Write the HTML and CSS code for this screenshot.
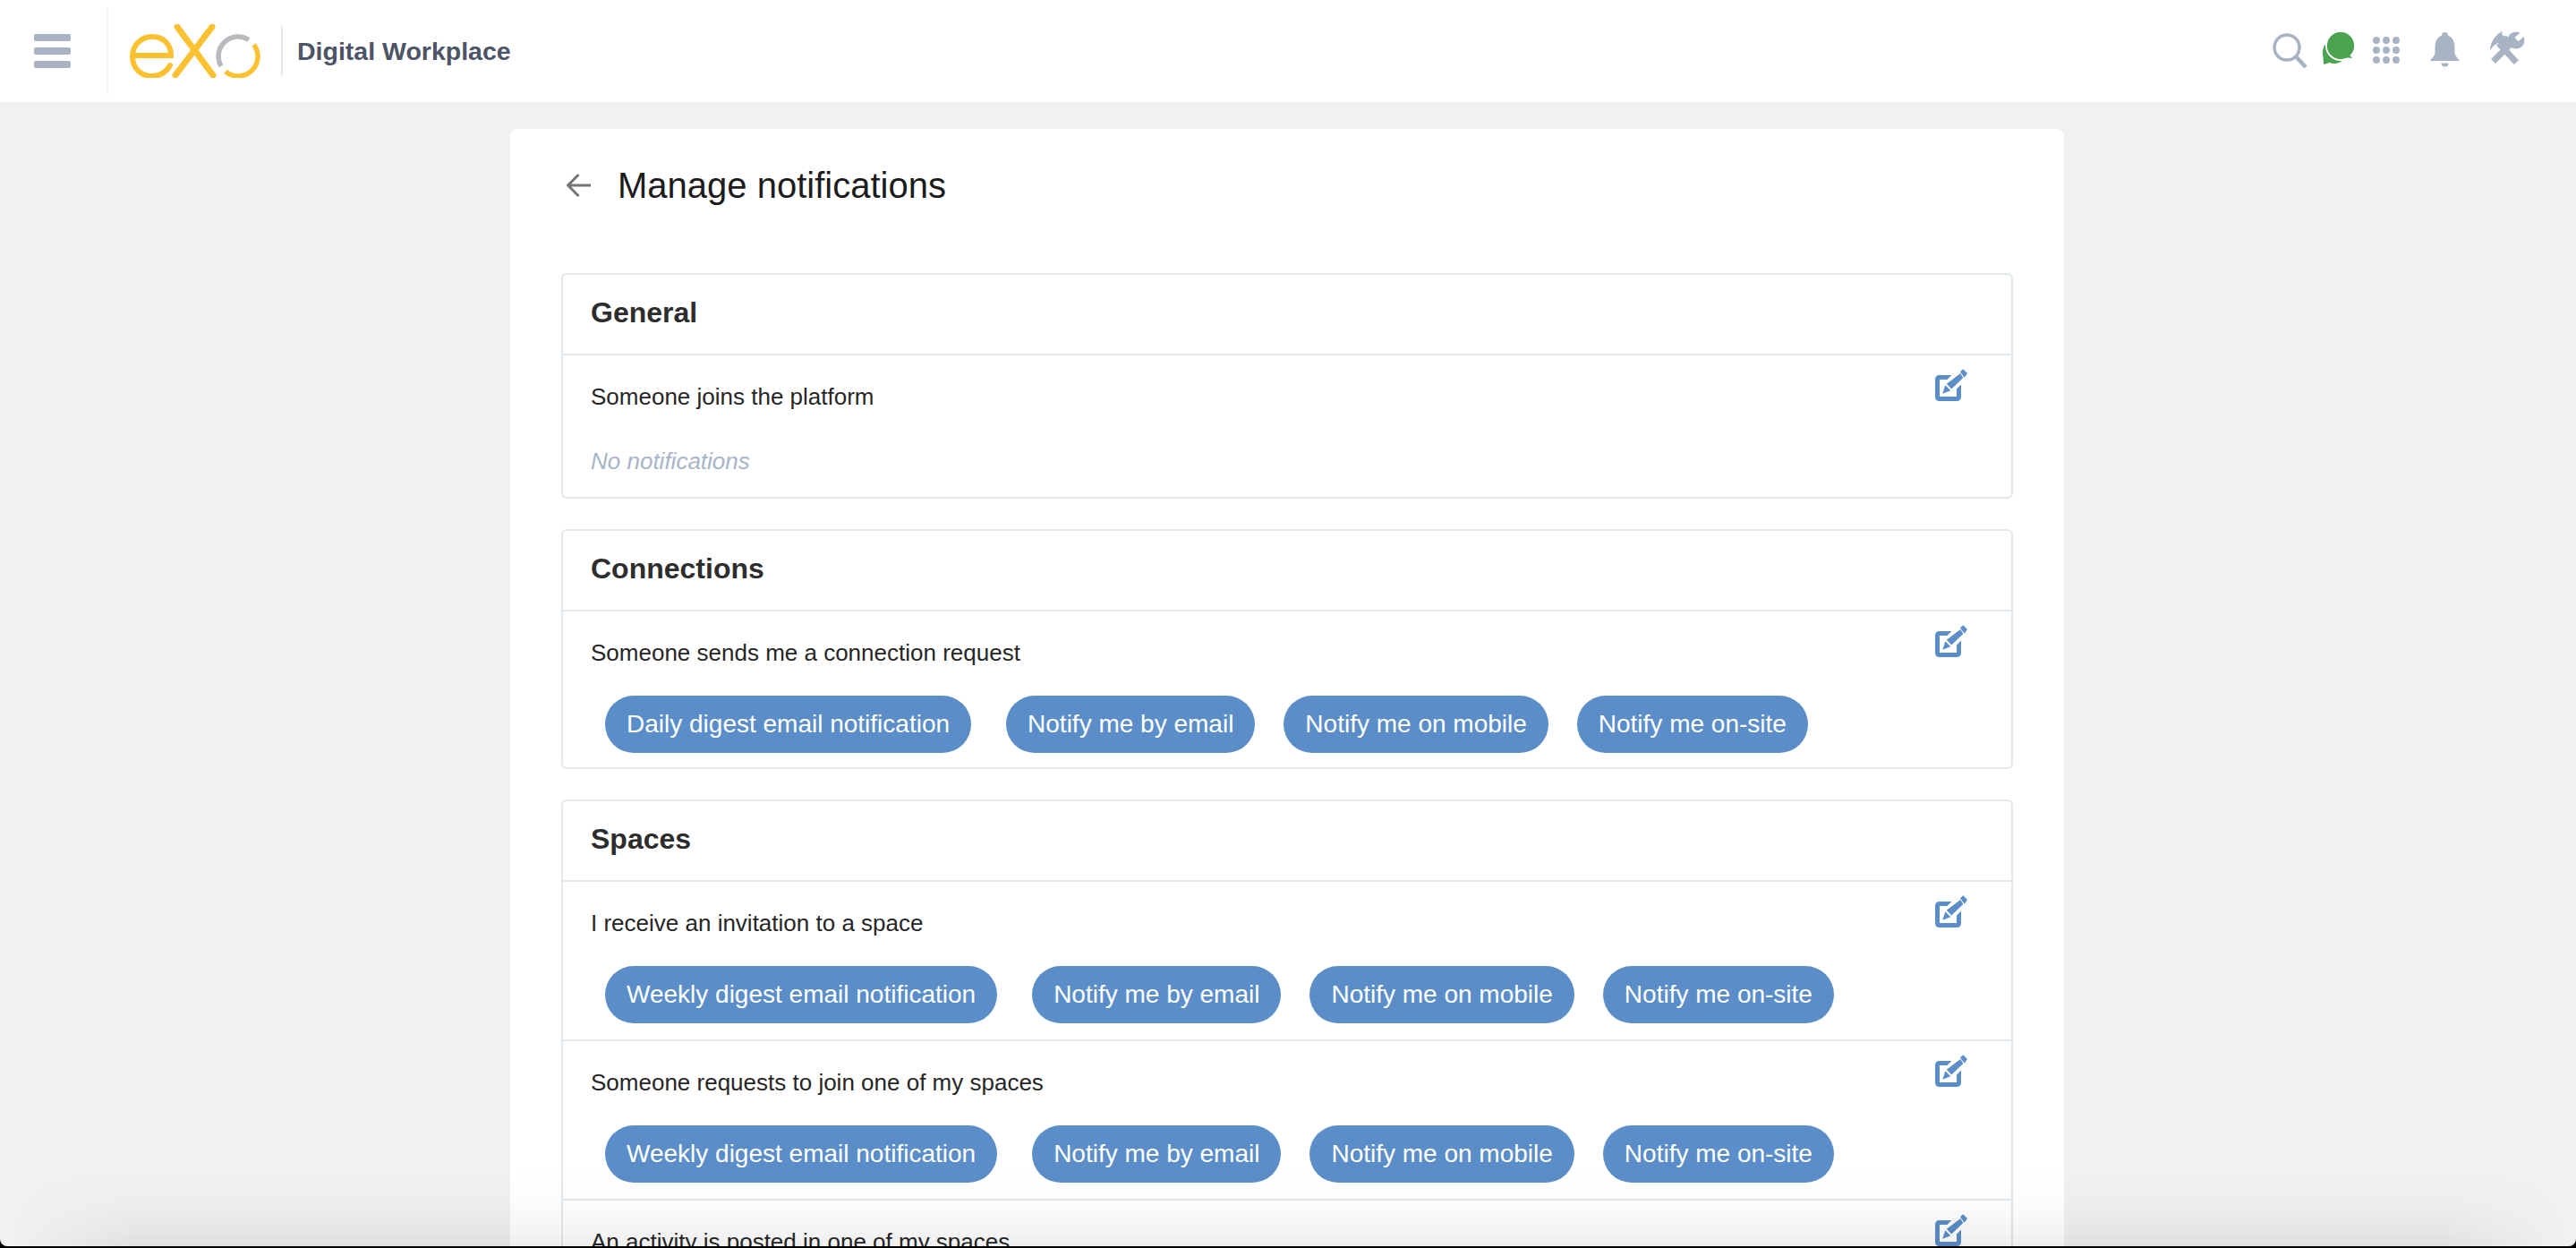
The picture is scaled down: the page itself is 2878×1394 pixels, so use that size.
FILE: index.html
```html
<!DOCTYPE html>
<html lang="en">
<head>
    <meta charset="utf-8">
    <title>Manage notifications</title>
    <meta name="viewport" content="width=device-width,initial-scale=1.0">
    <link rel="stylesheet" href="styles.css">
</head>
<body>
    <svg class="defs" width="0" height="0">
        <symbol id="edit" viewBox="0 0 36 36">
            <rect x="2.500" y="9.500" width="24" height="24" rx="2" fill="none" stroke="#5b8ec9" stroke-width="5"/>
            <path d="M14 22 L33 3" stroke="#fff" stroke-width="15" fill="none"/>
            <path d="M8.300 27.700 L11.300 18.300 L17.300 24.300 Z" fill="#5b8ec9"/>
            <path d="M12.800 16.800 L28.300 5 L31.300 10 L18.300 22.500 Z" fill="#5b8ec9"/>
            <path d="M28 3.300 L31.300 0.300 L36 5 L32.700 9.700 Z" fill="#5b8ec9"/>
        </symbol>
    </svg>

    <header class="topbar">
        <div class="burger"><span></span><span></span><span></span></div>
        <div class="brand">
            <svg class="logo" width="150" height="60" viewBox="0 0 150 60" fill="none" stroke-linecap="round">
                <path d="M3 35 H46 C46 22 37 14 25 14 C12 14 3 24 3 36 C3 49 12 58 25 58 C34 58 41 53 45 46" stroke="#fcc131" stroke-width="6"/>
                <path d="M53 3 L93 57 M92 3 L51 57" stroke="#fcc131" stroke-width="7"/>
                <path d="M133 17.500 A22 22 0 0 0 102 47" stroke="#b8babd" stroke-width="5.500" stroke-linecap="butt"/>
                <path d="M138.600 22.800 A22 22 0 0 1 106.900 52.900" stroke="#fcc131" stroke-width="5.500" stroke-linecap="butt"/>
            </svg>
            <span class="brand-name">Digital Workplace</span>
        </div>
        <nav class="tools">
            <svg class="tool-search" width="39" height="40" viewBox="0 0 39 40" fill="none" stroke="#a8b4c4">
                <circle cx="16" cy="16" r="14" stroke-width="3.500"/>
                <path d="M26 26 L37 38" stroke-width="4.500"/>
            </svg>
            <svg class="tool-chat" width="36" height="37" viewBox="0 0 36 37" fill="#4ba34f">
                <circle cx="14" cy="22" r="13"/>
                <path d="M1 20 L2 36 L12 33 Z"/>
                <circle cx="21" cy="15" r="16" stroke="#fff" stroke-width="2"/>
                <circle cx="21" cy="15" r="15"/>
                <path d="M28 22 L34 29 L24 28 Z"/>
            </svg>
            <svg class="tool-apps" width="30" height="30" viewBox="0 0 30 30" fill="#a8b4c4">
                <circle cx="4" cy="4" r="4"/><circle cx="15" cy="4" r="4"/><circle cx="26" cy="4" r="4"/>
                <circle cx="4" cy="15" r="4"/><circle cx="15" cy="15" r="4"/><circle cx="26" cy="15" r="4"/>
                <circle cx="4" cy="26" r="4"/><circle cx="15" cy="26" r="4"/><circle cx="26" cy="26" r="4"/>
            </svg>
            <svg class="tool-bell" width="33" height="40" viewBox="0 0 33 40" fill="#a8b4c4">
                <circle cx="16.500" cy="3.500" r="3.500"/>
                <path d="M16.500 3 C9 3 5.500 10 5.500 16 V22 C5.500 26 2 29 0 32 H33 C31 29 27.500 26 27.500 22 V16 C27.500 10 24 3 16.500 3 Z"/>
                <path d="M12.500 34.500 H20.500 A4 4 0 0 1 12.500 34.500 Z"/>
            </svg>
            <svg class="tool-wrench" width="40" height="37" viewBox="0 0 40 37" fill="#a8b4c4">
                <path d="M0 22 C0 12 6 3 14 0 C12 4 15 6 18 5 L23 9 L15 18 L10 13 C6 14 2 17 0 22 Z"/>
                <path d="M27 32 L12 16" stroke="#a8b4c4" stroke-width="7" stroke-linecap="square"/>
                <path d="M6 31 L26 11" stroke="#a8b4c4" stroke-width="7" stroke-linecap="square"/>
                <circle cx="29" cy="10" r="9.500"/>
                <path d="M29.500 9 L39 1" stroke="#fff" stroke-width="6"/>
            </svg>
        </nav>
    </header>

    <main class="page">
        <div class="card">
            <div class="card-head">
                <svg class="back" width="27" height="26" viewBox="0 0 27 26" fill="none" stroke="#757575" stroke-width="3">
                    <path d="M27 13 H2 M13.500 1 L1.500 13 L13.500 25"/>
                </svg>
                <h1>Manage notifications</h1>
            </div>

            <section class="group">
                <h2>General</h2>
                <div class="row">
                    <div class="row-main">
                        <div class="label">Someone joins the platform</div>
                        <div class="empty">No notifications</div>
                    </div>
                    <svg class="edit"><use href="#edit"/></svg>
                </div>
            </section>

            <section class="group">
                <h2>Connections</h2>
                <div class="row">
                    <div class="row-main">
                        <div class="label">Someone sends me a connection request</div>
                        <ul class="chips">
                            <li>Daily digest email notification</li>
                            <li>Notify me by email</li>
                            <li>Notify me on mobile</li>
                            <li>Notify me on-site</li>
                        </ul>
                    </div>
                    <svg class="edit"><use href="#edit"/></svg>
                </div>
            </section>

            <section class="group">
                <h2>Spaces</h2>
                <div class="row">
                    <div class="row-main">
                        <div class="label">I receive an invitation to a space</div>
                        <ul class="chips">
                            <li>Weekly digest email notification</li>
                            <li>Notify me by email</li>
                            <li>Notify me on mobile</li>
                            <li>Notify me on-site</li>
                        </ul>
                    </div>
                    <svg class="edit"><use href="#edit"/></svg>
                </div>
                <div class="row">
                    <div class="row-main">
                        <div class="label">Someone requests to join one of my spaces</div>
                        <ul class="chips">
                            <li>Weekly digest email notification</li>
                            <li>Notify me by email</li>
                            <li>Notify me on mobile</li>
                            <li>Notify me on-site</li>
                        </ul>
                    </div>
                    <svg class="edit"><use href="#edit"/></svg>
                </div>
                <div class="row">
                    <div class="row-main">
                        <div class="label">An activity is posted in one of my spaces</div>
                    </div>
                    <svg class="edit"><use href="#edit"/></svg>
                </div>
            </section>
        </div>
    </main>

    <div class="window-shade"></div>
    <div class="window-edge"></div>
</body>
</html>
```

FILE: styles.css
```css
html, body {
    height: 100%;
    margin: 0;
    overflow: hidden;
}

body {
    background: #f1f1f1;
    font-family: "Liberation Sans", Arial, sans-serif;
    color: #222;
}

.defs {
    display: block;
    height: 0;
}

.topbar {
    display: flex;
    align-items: center;
    height: 114px;
    background: #fff;
    padding-right: 56px;
}

.burger {
    display: flex;
    flex-direction: column;
    gap: 7px;
    box-sizing: border-box;
    width: 121px;
    height: 95px;
    justify-content: center;
    padding: 0 40px 0 38px;
    border-right: 2px solid #f1f2f3;
}

.burger span {
    display: block;
    height: 8px;
    border-radius: 2px;
    background: #a8b4c4;
}

.brand {
    display: flex;
    align-items: center;
    margin-left: 24px;
}

.logo {
    margin-right: 19px;
}

.brand-name {
    display: block;
    border-left: 2px solid #e1e8ee;
    padding-left: 16px;
    line-height: 56px;
    font-size: 28.500px;
    font-weight: bold;
    color: #4d5466;
}

.tools {
    display: flex;
    align-items: center;
    margin-left: auto;
}

.tool-chat {
    margin-left: 16px;
    margin-top: -5px;
}

.tool-apps {
    margin-left: 21px;
    margin-top: -2px;
}

.tool-bell {
    margin-left: 34px;
    margin-top: -2px;
}

.tool-wrench {
    margin-left: 34px;
    margin-top: -7px;
}

.page {
    display: flex;
    justify-content: center;
    padding: 30px 2px 0 0;
}

.card {
    box-sizing: border-box;
    width: 1736px;
    padding: 0 57px;
    background: #fff;
    border-radius: 8px;
}

.card-head {
    display: flex;
    align-items: center;
    gap: 30px;
    height: 126px;
    padding-left: 6px;
    margin-bottom: 35px;
}

.card-head h1 {
    margin: 0;
    font-size: 40px;
    font-weight: normal;
    color: #1c1c1c;
}

.group {
    border: 2px solid #e1e8ee;
    border-radius: 6px;
    margin-bottom: 34px;
}

.group h2 {
    margin: 0;
    height: 88px;
    padding-left: 31px;
    line-height: 84px;
    font-size: 32px;
    color: #2d2d2d;
}

.row {
    display: flex;
    justify-content: space-between;
    border-top: 2px solid #e1e8ee;
    padding: 31px 49px 18px 31px;
}

.row:last-child {
    padding-bottom: 16px;
}

.label {
    height: 30px;
    line-height: 30px;
    font-size: 26px;
    color: #262626;
}

.empty {
    height: 30px;
    line-height: 30px;
    margin: 42px 0 9px;
    font-size: 26px;
    font-style: italic;
    color: #a8b4c8;
}

.chips {
    display: flex;
    gap: 32px;
    list-style-type: none;
    margin: 33px 0 0 16px;
    padding: 0;
}

.chips li {
    height: 64px;
    padding: 0 24px;
    border-radius: 32px;
    background: #5b8ec9;
    color: #fff;
    font-size: 28px;
    line-height: 64px;
}

.chips li:first-child {
    margin-right: 7px;
}

.edit {
    width: 36px;
    height: 36px;
    margin-top: -16px;
}

.window-shade {
    position: fixed;
    left: 0;
    right: 0;
    bottom: 0;
    height: 90px;
    background: linear-gradient(to bottom, rgba(0, 0, 0, 0), rgba(0, 0, 0, 0.012) 40%, rgba(0, 0, 0, 0.045) 80%, rgba(0, 0, 0, 0.07));
    -webkit-mask-image: linear-gradient(to right, transparent 10px, #000 150px, #000 2730px, transparent 2868px);
    mask-image: linear-gradient(to right, transparent 10px, #000 150px, #000 2730px, transparent 2868px);
}

.window-edge {
    position: fixed;
    top: 0;
    left: 0;
    right: 0;
    bottom: 2px;
    border-radius: 0 0 8px 8px;
    box-shadow: 0 0 0 20px #000;
}
```
